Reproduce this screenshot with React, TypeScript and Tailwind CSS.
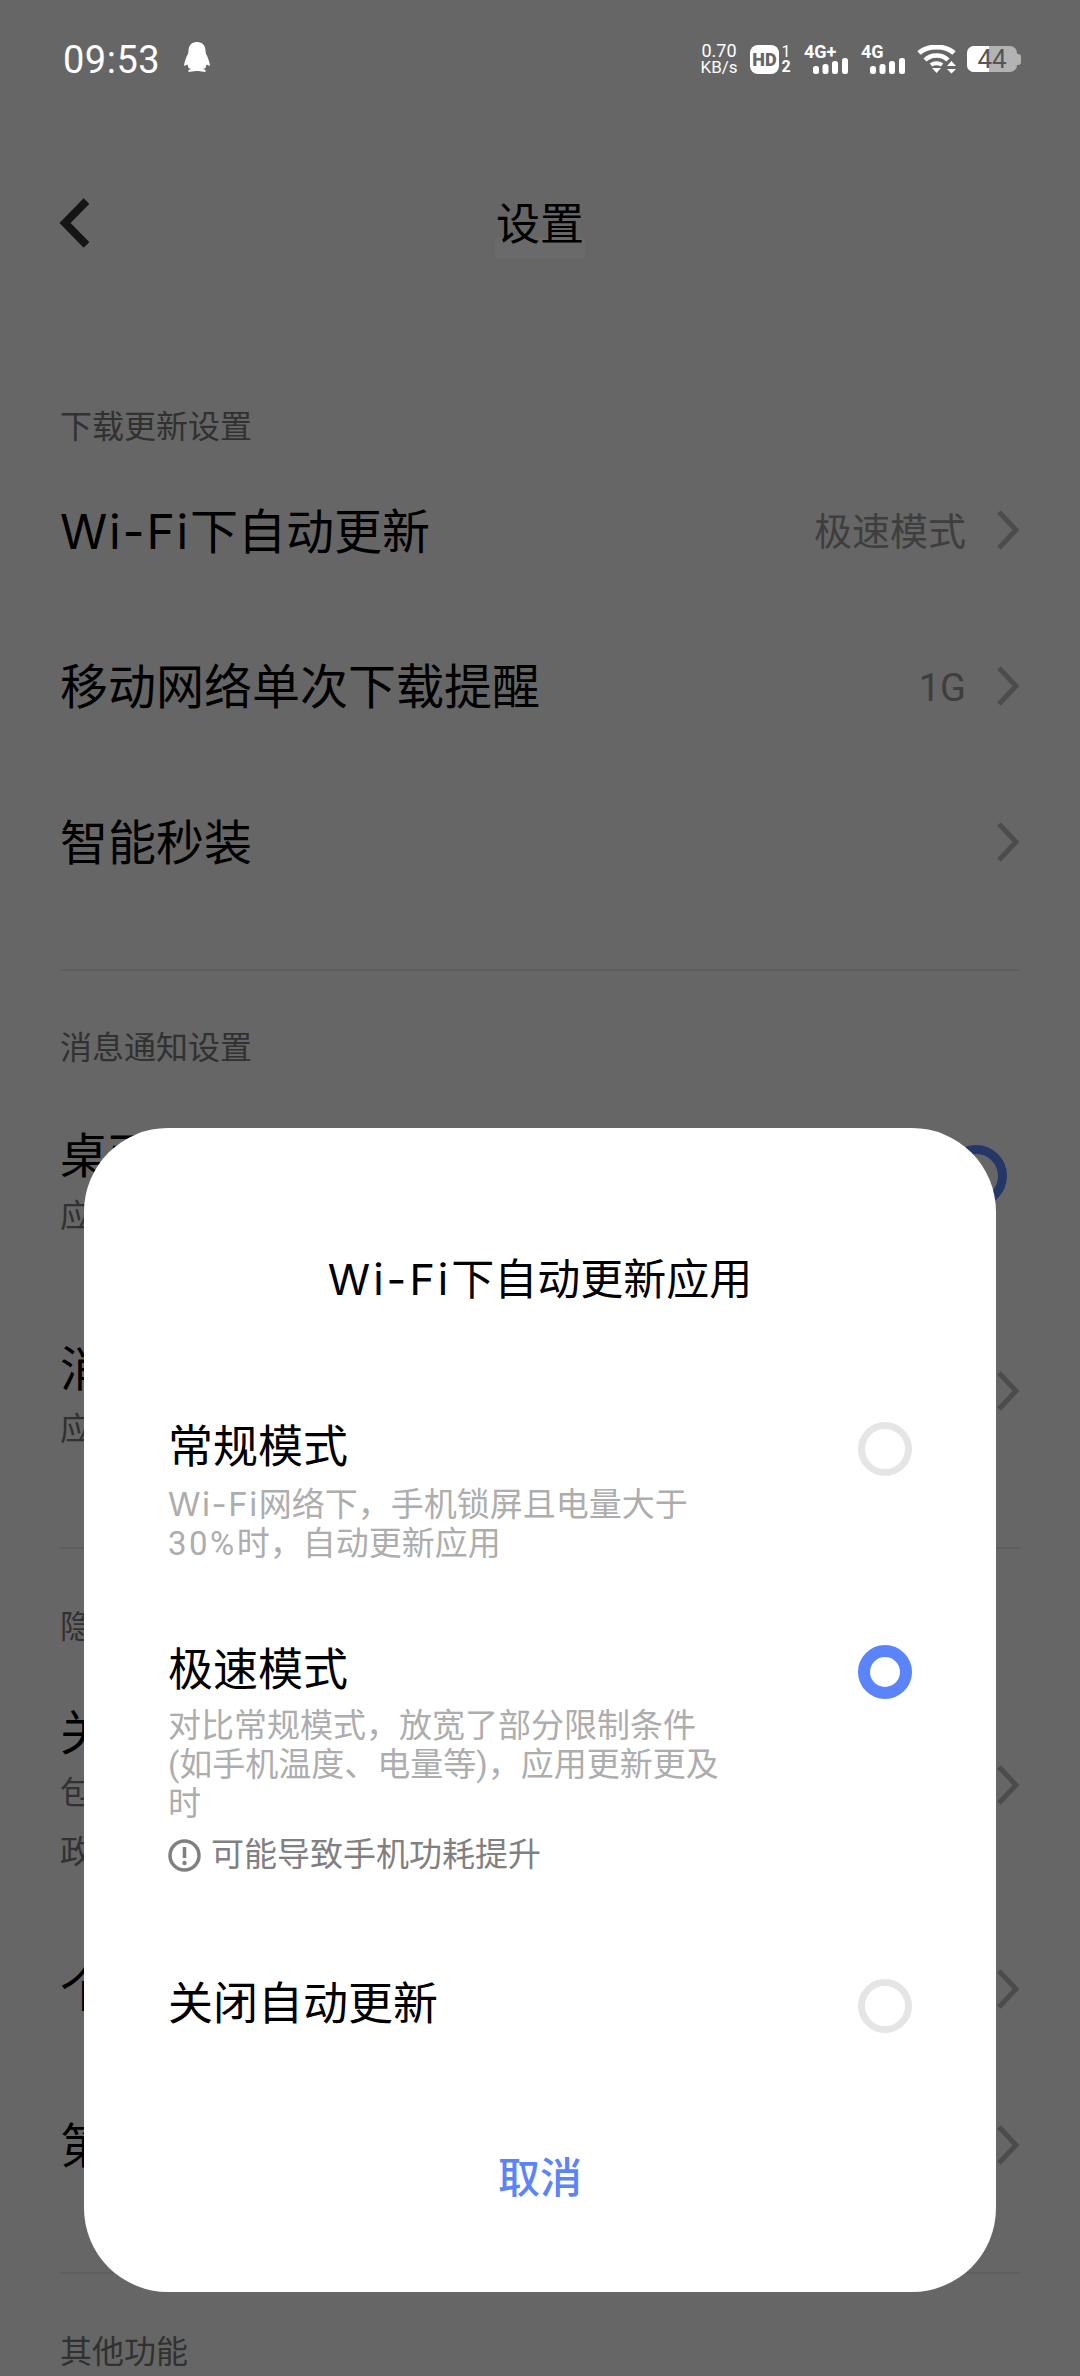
const FONT = 'font-["Roboto","Noto_Sans_CJK_SC",sans-serif]'

const Chevron = ({ className = '' }: { className?: string }) => (
  <svg width="24" height="40" viewBox="0 0 24 40" fill="none" className={`shrink-0 ${className}`}>
    <path d="M3 2 L20 20 L3 38" stroke="#bdbdbd" strokeWidth="5" />
  </svg>
)

const Signal = ({ label }: { label: string }) => (
  <div className="flex h-[29px] w-[44px] flex-col justify-between">
    <span className="text-[18px] font-bold leading-[13px] text-white">{label}</span>
    <svg width="35" height="16" viewBox="0 0 35 16" className="ml-[9px]" fill="#fff">
      <rect x="0" y="8" width="6" height="8" rx="2.5" />
      <rect x="9.5" y="6" width="6" height="10" rx="2.5" />
      <rect x="19" y="3" width="6" height="13" rx="2.5" />
      <rect x="29" y="0" width="6" height="16" rx="2.5" />
    </svg>
  </div>
)

const StatusBar = () => (
  <div className="relative z-20 flex h-[80px] items-center justify-between pl-[63px] pr-[59px] pt-[38px] text-white">
    <div className="flex items-center gap-[24px]">
      <span className="mt-[2px] text-[38px] leading-none tracking-[0.5px]">09:53</span>
      <svg width="26" height="30" viewBox="0 0 26 30" fill="#fff" className="-mt-[4px]">
        <path d="M13 0 C19 0 21.5 4 21.5 9 L22 12 C24 15 25.5 20 26 24 L22.5 22.5 L21.5 26 L19 27 L21.5 28 L21.5 30 L14 29 L12 29 L4.5 30 L4.5 28 L7 27 L4.5 26 L3.5 22.5 L0 24 C.5 20 2 15 4 12 L4.5 9 C4.5 4 7 0 13 0Z" />
      </svg>
    </div>
    <div className="flex items-center">
      <div className="mr-[13px] flex w-[36px] flex-col items-center text-[18px] leading-[17px]">
        <span>0.70</span>
        <span className="text-[17px]">KB/s</span>
      </div>
      <div className="flex h-[29px] w-[29px] items-center justify-center rounded-[8px] bg-white text-[18px] font-black text-[#666]">
        HD
      </div>
      <div className="ml-[3px] mr-[14px] flex w-[8px] flex-col items-center text-[16px] font-bold leading-[15px]">
        <span className="font-normal">1</span>
        <span>2</span>
      </div>
      <Signal label="4G+" />
      <div className="w-[13px]" />
      <Signal label="4G" />
      <div className="w-[12px]" />
      <svg width="40" height="29" viewBox="0 0 40 29" fill="none">
        <path d="M2 8 C11 0 28 0 37 8" stroke="#fff" strokeWidth="5" />
        <path d="M8 15 C14 9 25 9 31 15" stroke="#fff" strokeWidth="4.5" />
        <path d="M15 23 L24 23 L19.5 28 Z" fill="#fff" />
        <path d="M14 20 C17 17.5 22 17.5 25 20" stroke="#fff" strokeWidth="4" />
        <path d="M30 21 L34.5 16 L39 21 Z M30 24 L39 24 L34.5 28.5 Z" fill="#fff" />
      </svg>
      <div className="ml-[10px] flex items-center">
        <div className="relative flex h-[26px] w-[50px] items-center justify-center rounded-[7px] bg-white/50">
          <div className="absolute inset-y-0 left-0 w-[22px] rounded-l-[7px] bg-white" />
          <span className="relative text-[26px] leading-none text-[#555]">44</span>
        </div>
        <div className="h-[11px] w-[4px] rounded-r-[3px] bg-white/50" />
      </div>
    </div>
  </div>
)

const NavBar = () => (
  <div className="relative z-20 mt-[118px] flex h-[60px] items-center justify-center">
    <svg width="30" height="50" viewBox="0 0 30 50" fill="none" className="absolute left-[59px] top-0">
      <path d="M27.5 3 L6 25 L27.5 47" stroke="#151515" strokeWidth="8" />
    </svg>
    <div className="relative -mt-[6px]">
      <div className="absolute -bottom-[12px] -left-[1px] -right-[1px] h-[21px] bg-white/[0.03]" />
      <span className="relative text-[44px] leading-none text-black">设置</span>
    </div>
  </div>
)

const SectionLabel = ({ text }: { text: string }) => (
  <div className="text-[32px] leading-[40px] text-[#7a7a7a]">{text}</div>
)

const Row = ({ title, value }: { title: React.ReactNode; value?: string }) => (
  <div className="flex h-[156px] items-center justify-between">
    <span className="text-[48px] leading-none text-black">{title}</span>
    <div className="flex items-center gap-[30px]">
      {value && <span className="text-[38px] leading-none text-[#9c9c9c]">{value}</span>}
      <Chevron className="mb-[4px]" />
    </div>
  </div>
)

const DetailRow = ({ title, lines, chevron }: { title: string; lines: string[]; chevron: string }) => (
  <div className="flex items-start justify-between">
    <div>
      <div className="text-[48px] leading-[60px] text-black">{title}</div>
      {lines.map((l) => (
        <div key={l} className="text-[32px] leading-[59px] text-[#7a7a7a]">
          {l}
        </div>
      ))}
    </div>
    <Chevron className={chevron} />
  </div>
)

const Divider = () => <div className="h-[2px] bg-[#ececec]" />

const SettingsPage = () => (
  <div className="px-[60px]">
    <div className="mt-[149px]">
      <SectionLabel text="下载更新设置" />
    </div>
    <div className="mt-[7px]">
      <Row title={<><span className='font-["Inter"] tracking-[1.8px]'>Wi-Fi</span>下自动更新</>} value="极速模式" />
      <Row title="移动网络单次下载提醒" value="1G" />
      <Row title="智能秒装" />
    </div>
    <div className="mt-[47px]">
      <Divider />
    </div>
    <div className="mt-[57px]">
      <SectionLabel text="消息通知设置" />
    </div>
    <div className="mt-[68px] flex h-[100px] items-center justify-between">
      <div>
        <div className="text-[48px] leading-[60px] text-black">桌面角标</div>
        <div className="text-[32px] leading-[59px] text-[#7a7a7a]">应用更新提示</div>
      </div>
      <div className="relative -top-[10px] mr-[13px] h-[62px] w-[62px] rounded-full border-[9px] border-[#5b8aff]" />
    </div>
    <div className="mt-[104px]">
      <DetailRow title="消息通知" lines={['应用更新提醒']} chevron="mt-[31px]" />
    </div>
    <div className="mt-[88px]">
      <Divider />
    </div>
    <div className="mt-[58px]">
      <SectionLabel text="隐私设置" />
    </div>
    <div className="mt-[57px]">
      <DetailRow title="关于应用" lines={['包含协议', '政策']} chevron="mt-[61px]" />
    </div>
    <div className="mt-[31px]">
      <Row title="个人信息" />
      <Row title="第三方信息" />
    </div>
    <div className="mt-[47px]">
      <Divider />
    </div>
    <div className="mt-[58px]">
      <SectionLabel text="其他功能" />
    </div>
  </div>
)

const Radio = ({ on }: { on?: boolean }) => (
  <div
    className={`mt-[2px] h-[54px] w-[54px] shrink-0 rounded-full ${
      on ? 'border-[12px] border-[#5b84fb]' : 'border-[7px] border-[#e5e5e5]'
    }`}
  />
)

const Dialog = () => (
  <div className="flex h-[1164px] w-[912px] flex-col rounded-[84px] bg-white">
    <div className="mt-[127px] text-center text-[43px] leading-[48px] text-black">
      <span className='font-["Inter"] tracking-[3px]'>Wi-Fi</span>下自动更新应用
    </div>

    {/* Options */}
    <div className="mt-[116px] flex items-start justify-between px-[84px]">
      <div>
        <div className="text-[45px] leading-[56px] text-black">常规模式</div>
        <div className="mt-[9px] w-[540px] text-[33px] leading-[39px] text-[#adadad]">
          <span className='font-["Inter"] tracking-[1.5px]'>Wi-Fi</span>网络下，手机锁屏且电量大于
          <span className="tracking-[2.5px]">30%</span>时，自动更新应用
        </div>
      </div>
      <Radio />
    </div>

    <div className="mt-[80px] flex items-start justify-between px-[84px]">
      <div>
        <div className="text-[45px] leading-[56px] text-black">极速模式</div>
        <div className="mt-[7px] w-[560px] text-[33px] leading-[39px] text-[#adadad]">
          对比常规模式，放宽了部分限制条件(如手机温度、电量等)，应用更新更及时
        </div>
        <div className="mt-[12px] flex items-center gap-[10px] text-[33px] leading-[40px] text-[#808080]">
          <svg width="33" height="33" viewBox="0 0 33 33" fill="none">
            <circle cx="16.5" cy="16.5" r="14.5" stroke="#808080" strokeWidth="3.5" />
            <path d="M16.5 8 V19" stroke="#808080" strokeWidth="3.5" />
            <circle cx="16.5" cy="24" r="2.2" fill="#808080" />
          </svg>
          可能导致手机功耗提升
        </div>
      </div>
      <Radio on />
    </div>

    <div className="mt-[102px] flex items-start justify-between px-[84px]">
      <div className="text-[45px] leading-[56px] text-black">关闭自动更新</div>
      <Radio />
    </div>

    <div className="mt-[118px] text-center text-[42px] font-medium leading-[56px] text-[#5b84fb]">取消</div>
  </div>
)

export default function App() {
  return (
    <div className={`relative h-[2376px] w-[1080px] overflow-hidden bg-white ${FONT}`}>
      <StatusBar />
      <NavBar />
      <SettingsPage />
      {/* Dim layer + sheet */}
      <div className="absolute inset-0 z-10 flex items-end justify-center bg-black/60 pb-[84px]">
        <Dialog />
      </div>
    </div>
  )
}
